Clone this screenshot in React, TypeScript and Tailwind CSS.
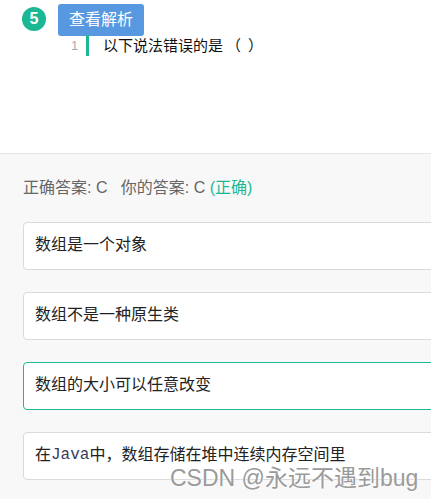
import React from "react";

const options = [
  { text: <>数组是一个对象</>, correct: false },
  { text: <>数组不是一种原生类</>, correct: false },
  { text: <>数组的大小可以任意改变</>, correct: true },
  {
    text: (
      <>
        在<span className="text-[#3a3a5a]" style={{ fontFamily: '"Liberation Mono", monospace' }}>Java</span>中，数组存储在堆中连续内存空间里
      </>
    ),
    correct: false,
  },
];

export default function App() {
  return (
    <div
      className="relative w-[431px] h-[499px] overflow-hidden bg-[#f8f8f8]"
      style={{ fontFamily: '"Liberation Sans", "Noto Sans CJK SC", sans-serif' }}
    >
      <div className="h-[154px] bg-white border-b border-[#e6e6e6]">
        <div className="flex items-start">
          <div className="ml-[22px] mt-[7px] w-[24px] h-[24px] rounded-full bg-[#1cb894] text-white text-[16px] leading-[24px] text-center font-bold">
            5
          </div>
          <div className="ml-[12px] mt-[4px] w-[86px] h-[32px] rounded-[3px] bg-[#5898e0] text-white text-[16px] leading-[32px] text-center">
            查看解析
          </div>
        </div>
        <div className="flex items-center h-[21px] -mt-[1px]">
          <span className="ml-[71px] w-[15px] text-[13px] text-[#aaa]">1</span>
          <span className="w-[3px] h-[21px] bg-[#1cb894]" />
          <span
            className="ml-[14px] text-[15px] text-[#111]"
            style={{ fontFamily: '"Noto Sans CJK SC", sans-serif' }}
          >
            以下说法错误的是<span className="ml-[3px]">（</span><span className="ml-[7px]">）</span>
          </span>
        </div>
      </div>
      <div className="pl-[23px] pt-[22px]">
        <div className="text-[16px] leading-[24px] text-[#666]">
          正确答案: C&nbsp;&nbsp;&nbsp;你的答案: C <span className="text-[#1cb894]">(正确)</span>
        </div>
        <div className="mt-[22px] flex flex-col gap-[22px]">
          {options.map((o, i) => (
            <div
              key={i}
              className={`w-[430px] h-[48px] rounded-[4px] bg-white border flex items-center pl-[11px] pb-[3px] text-[16px] text-[#222] ${
                o.correct ? "border-[#1cb894]" : "border-[#dadada]"
              }`}
            >
              {o.text}
            </div>
          ))}
        </div>
      </div>
      <div
        className="absolute left-[170px] top-[463px] text-[23px] leading-[30px] text-[#9a9a9a] whitespace-nowrap"
        style={{ textShadow: "0 0 2px #fff, 0 0 2px #fff" }}
      >
        CSDN @永远不遇到bug
      </div>
    </div>
  );
}
